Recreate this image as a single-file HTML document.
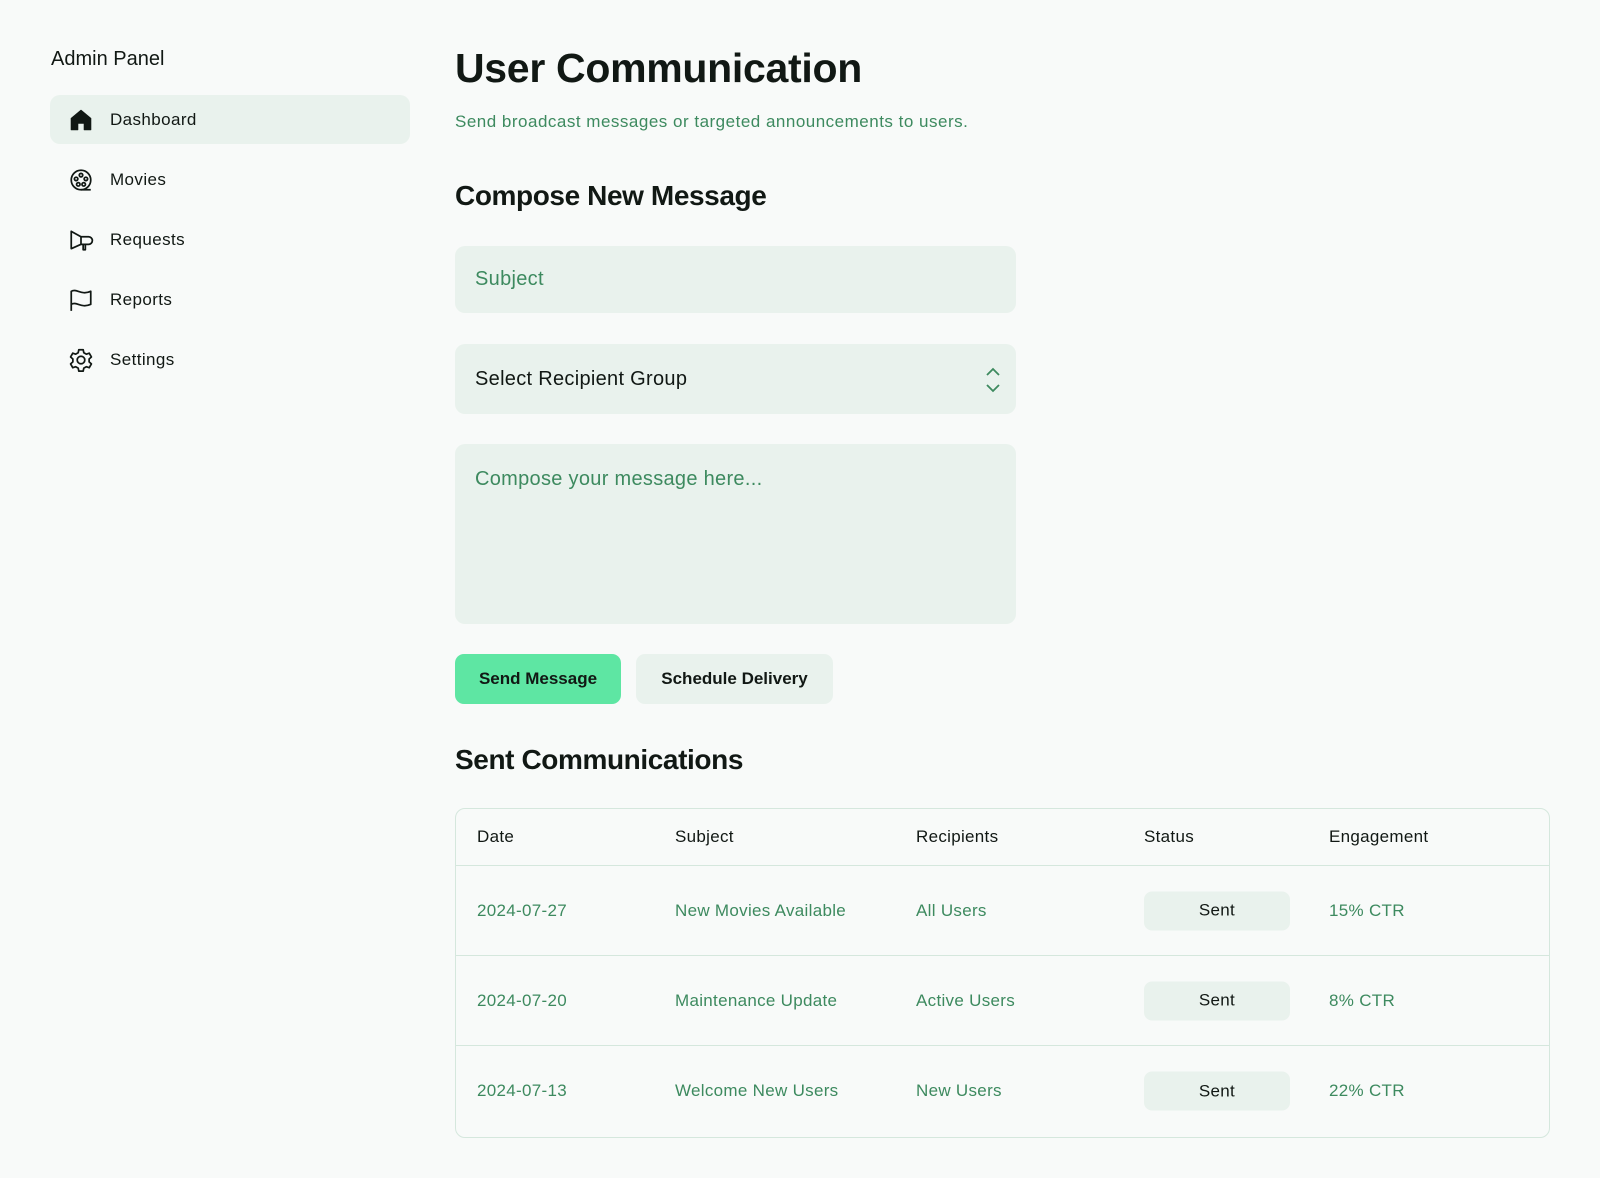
<!DOCTYPE html>
<html><head><meta charset="utf-8"><style>
*{box-sizing:border-box;margin:0;padding:0}
body{width:1600px;height:1178px;background:#f8faf9;font-family:"Liberation Sans",sans-serif;color:#111814;position:relative;overflow:hidden}
.abs{position:absolute}
.brand{left:51px;top:48px;font-size:20px}
.nav{left:50px;width:360px;height:49px;border-radius:10px;font-size:17px;letter-spacing:0.4px;display:flex;align-items:center;padding-left:18px}
.nav.act{background:#e9f2ed}
.nav svg{width:26px;height:26px;margin-right:16px}
h1{position:absolute;left:455px;top:45px;font-size:41px;font-weight:bold;letter-spacing:-0.3px}
.sub{left:455px;top:112px;font-size:17px;letter-spacing:0.5px;color:#3d8a5f}
h2{position:absolute;left:455px;font-size:28px;font-weight:bold;letter-spacing:-0.4px}
.inp{left:455px;width:561px;background:#e9f2ed;border-radius:10px;font-size:20px;letter-spacing:0.3px;padding-left:20px;display:flex;align-items:center}
.btn{top:654px;height:50px;border-radius:9px;font-size:17px;font-weight:bold;display:flex;align-items:center;justify-content:center}
.tbl{left:455px;top:808px;width:1095px;height:330px;border:1.5px solid #d5e7dd;border-radius:10px;overflow:hidden}
.row{position:absolute;left:0;width:100%;font-size:17px;letter-spacing:0.3px}
.row span{position:absolute;top:50%;transform:translateY(-50%)}
.g{color:#3d8a5f}
.badge{position:absolute;left:688px;width:146px;height:39px;background:#e9f2ed;border-radius:8px;display:flex;align-items:center;justify-content:center;color:#111814;top:50%;transform:translateY(-50%)}
</style></head><body>
<div class="abs brand">Admin Panel</div>
<div class="abs nav act" style="top:95px"><svg viewBox="0 0 24 24"><path d="M12 3 L21 10.5 V21 H15 V15 H9 V21 H3 V10.5 Z" fill="#111814" stroke="#111814" stroke-width="1" stroke-linejoin="round"/></svg>Dashboard</div>
<div class="abs nav" style="top:155px"><svg viewBox="0 0 24 24" fill="none" stroke="#111814" stroke-width="1.6"><circle cx="12" cy="12" r="9"/><circle cx="12" cy="7.5" r="1.6"/><circle cx="7.5" cy="11" r="1.6"/><circle cx="16.5" cy="11" r="1.6"/><circle cx="9.5" cy="16" r="1.6"/><circle cx="14.5" cy="16" r="1.6"/><path d="M12 21 H21"/></svg>Movies</div>
<div class="abs nav" style="top:215px"><svg viewBox="0 0 24 24" fill="none" stroke="#111814" stroke-width="1.6" stroke-linejoin="round"><path d="M3 4 V20 L12 16 H19 A3 3 0 0 0 19 9 H12 Z"/><path d="M12 9 V16 M14 16 V21 H16 V16"/></svg>Requests</div>
<div class="abs nav" style="top:275px"><svg viewBox="0 0 24 24" fill="none" stroke="#111814" stroke-width="1.6" stroke-linejoin="round"><path d="M3 22 V4 C8 1 12 8 21 4 V16 C12 20 8 13 3 16"/></svg>Reports</div>
<div class="abs nav" style="top:335px"><svg viewBox="0 0 24 24" fill="none" stroke="#111814" stroke-width="1.6" stroke-linejoin="round"><circle cx="12" cy="12" r="3.5"/><path d="M10 2.5h4l.6 2.8 2.3 1.3 2.7-.9 2 3.5-2.1 1.9v2.6l2.1 1.9-2 3.5-2.7-.9-2.3 1.3-.6 2.8h-4l-.6-2.8-2.3-1.3-2.7.9-2-3.5 2.1-1.9v-2.6L2.4 9.2l2-3.5 2.7.9 2.3-1.3z"/></svg>Settings</div>

<h1>User Communication</h1>
<div class="abs sub">Send broadcast messages or targeted announcements to users.</div>
<h2 style="top:180px">Compose New Message</h2>
<div class="abs inp" style="top:246px;height:67px;color:#3d8a5f">Subject</div>
<div class="abs inp" style="top:344px;height:70px;color:#111814">Select Recipient Group
<svg class="abs" style="left:530px;top:22px" width="16" height="28" viewBox="0 0 16 28" fill="none" stroke="#3d8a5f" stroke-width="1.8"><path d="M2 9 L8 3 L14 9 M2 19 L8 25 L14 19"/></svg></div>
<div class="abs inp" style="top:444px;height:180px;align-items:flex-start;padding-top:24px;color:#3d8a5f">Compose your message here...</div>
<div class="abs btn" style="left:455px;width:166px;background:#5ee6a3">Send Message</div>
<div class="abs btn" style="left:636px;width:197px;background:#e9f2ed">Schedule Delivery</div>
<h2 style="top:744px">Sent Communications</h2>
<div class="abs tbl">
<div class="row" style="top:0;height:57px;border-bottom:1.5px solid #d5e7dd"><span style="left:21px">Date</span><span style="left:219px">Subject</span><span style="left:460px">Recipients</span><span style="left:688px">Status</span><span style="left:873px">Engagement</span></div>
<div class="row g" style="top:57px;height:90px;border-bottom:1.5px solid #d5e7dd"><span style="left:21px">2024-07-27</span><span style="left:219px">New Movies Available</span><span style="left:460px">All Users</span><div class="badge">Sent</div><span style="left:873px">15% CTR</span></div>
<div class="row g" style="top:147px;height:90px;border-bottom:1.5px solid #d5e7dd"><span style="left:21px">2024-07-20</span><span style="left:219px">Maintenance Update</span><span style="left:460px">Active Users</span><div class="badge">Sent</div><span style="left:873px">8% CTR</span></div>
<div class="row g" style="top:237px;height:90px"><span style="left:21px">2024-07-13</span><span style="left:219px">Welcome New Users</span><span style="left:460px">New Users</span><div class="badge">Sent</div><span style="left:873px">22% CTR</span></div>
</div>
</body></html>
